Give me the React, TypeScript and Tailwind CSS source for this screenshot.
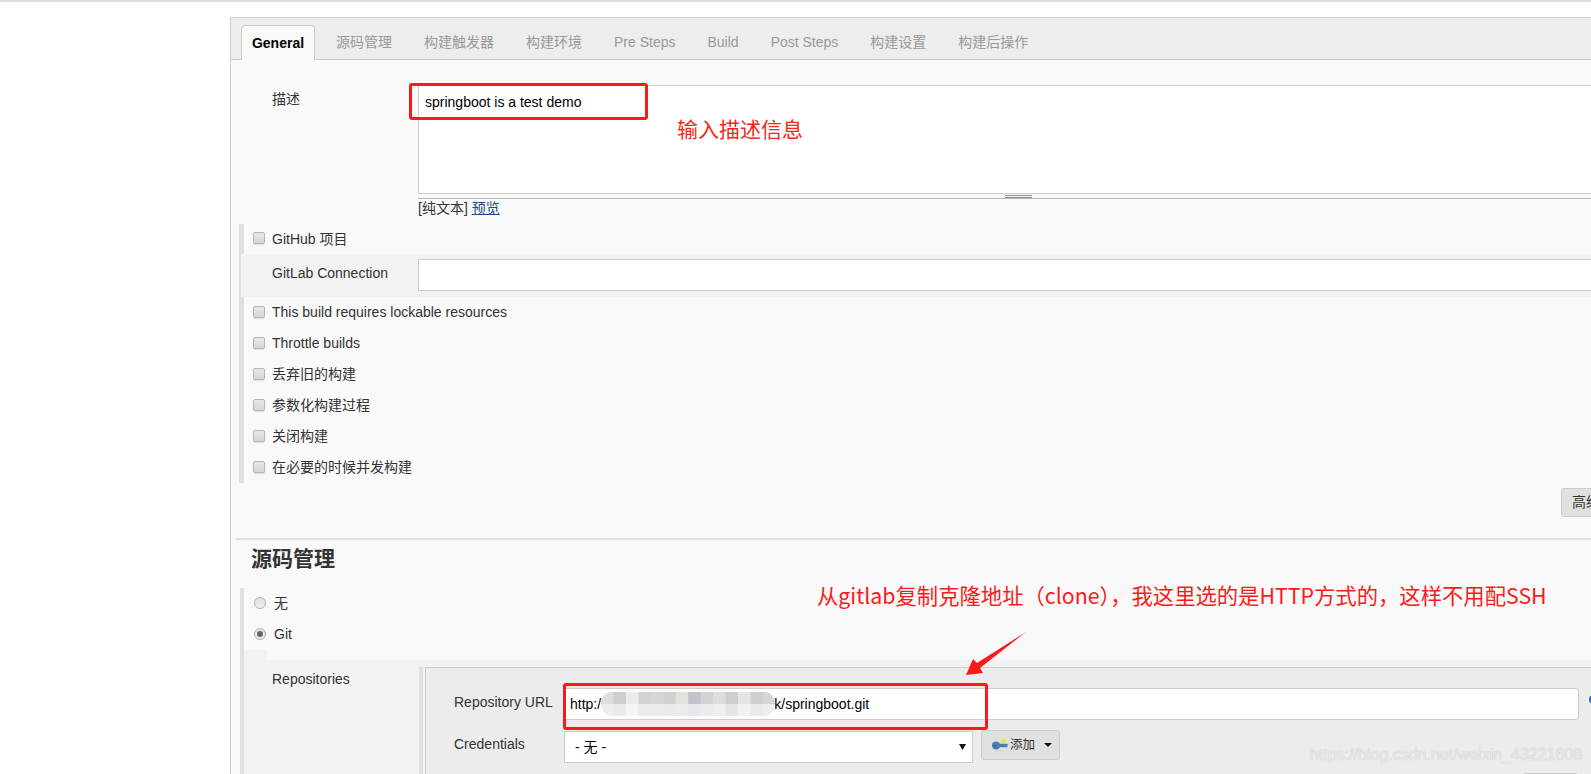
const cjk = "font-['Noto_Sans_CJK_SC','Liberation_Sans',sans-serif]";

const tabs = ["源码管理", "构建触发器", "构建环境", "Pre Steps", "Build", "Post Steps", "构建设置", "构建后操作"];

const upperOptions = ["This build requires lockable resources", "Throttle builds", "丢弃旧的构建", "参数化构建过程", "关闭构建", "在必要的时候并发构建"];

const mosaicTop = ["#dedede", "#cfcdcd", "#ebebeb", "#d2d2d2", "#d6d6d6", "#d0d0d0", "#e4e0dc", "#c4c0cc", "#d2d2d2", "#dadee2", "#cacecc", "#e2e6e6", "#d2cece", "#d6d6d6"];
const mosaicBottom = ["#eeeeee", "#eaeaea", "#f5f5f5", "#ebebeb", "#ececec", "#eaeaea", "#eeecea", "#e7e6ee", "#ececec", "#eef0f1", "#e4e6e4", "#f0f2f2", "#eaeaea", "#eeeeee"];

function Checkbox() {
  return (
    <span className="mb-[2px] block size-[12px] shrink-0 rounded-[2px] border border-[#b5b5b5] bg-gradient-to-b from-[#e8e8e8] to-[#d6d6d6] shadow-[0_1px_1px_#ddd]" />
  );
}

function Radio({ checked }: { checked?: boolean }) {
  return (
    <span className="mb-[2px] flex size-[12px] shrink-0 items-center justify-center rounded-full border border-[#b0b0b0] bg-gradient-to-b from-[#e2e2e2] to-[#eeeeee]">
      {checked && <span className="size-[6px] rounded-full bg-[#666]" />}
    </span>
  );
}

function CheckRow({ label, first }: { label: string; first?: boolean }) {
  return (
    <div className={first ? "flex h-[30px] items-center gap-[7px] pl-[9px] text-[14px] text-[#333]" : "flex h-[31px] items-center gap-[7px] pl-[9px] text-[14px] text-[#333]"}>
      <Checkbox />
      <span>{label}</span>
    </div>
  );
}

function Mosaic() {
  return (
    <svg width="174" height="24" viewBox="0 0 174 24" className="relative -mr-[4px] shrink-0 rounded-[11px]">
      {mosaicTop.map((c, i) => (
        <rect key={i} x={i * 12.45} y="0" width="12.8" height="12" fill={c} />
      ))}
      {mosaicBottom.map((c, i) => (
        <rect key={i} x={i * 12.45} y="12" width="12.8" height="12" fill={c} />
      ))}
    </svg>
  );
}

function KeyIcon() {
  return (
    <svg width="16" height="14" viewBox="0 0 16 14" className="shrink-0">
      <ellipse cx="11.5" cy="3" rx="2.6" ry="2.4" fill="#f1e05a" />
      <ellipse cx="4" cy="7.5" rx="4" ry="4" fill="#4a7db5" />
      <rect x="6" y="5.8" width="9.5" height="3.4" rx="0.5" fill="#4a7db5" />
      <rect x="2" y="7" width="2" height="1.5" fill="#2f5a8a" />
      <rect x="2" y="12.5" width="9" height="1" fill="#d0d0d0" />
    </svg>
  );
}

export default function App() {
  return (
    <div className="relative h-[774px] w-[1591px] overflow-hidden border-t-2 border-[#deded8] bg-white font-['Liberation_Sans','Noto_Sans_CJK_SC',sans-serif]">
      <div className="ml-[230px] mt-[15px] w-[1400px] border border-[#cccccc] bg-[#f9f9f9]">
        {/* tab bar */}
        <div className="flex h-[42px] items-end border-b border-[#cccccc] bg-[#ededed] pl-[10px] text-[14px]">
          <div className="-mb-px flex h-[35px] w-[74px] items-center justify-center rounded-t-[4px] border border-b-0 border-[#cccccc] bg-[#f9f9f9] font-bold text-black">
            General
          </div>
          <div className="ml-[21px] flex h-[34px] items-center gap-[32px] text-[#999]">
            {tabs.map((t) => (
              <span key={t}>{t}</span>
            ))}
          </div>
        </div>

        {/* description */}
        <div className="flex pt-[25px] text-[14px] text-[#333]">
          <div className="w-[187px] pl-[41px] pt-[4px]">描述</div>
          <div className="w-[1200px]">
            <div className="h-[109px] border border-[#cccccc] bg-white px-[6px] pt-[6px] leading-[20px] text-black">
              springboot is a test demo
            </div>
            <div className="flex h-[5px] justify-center border-b border-[#b8b8b0] pt-px">
              <span className="h-[3px] w-[27px] border-y border-[#888]" />
            </div>
            <div className="h-[20px] leading-[18px]">
              [纯文本] <span className="text-[#204a87] underline">预览</span>
            </div>
          </div>
        </div>

        {/* general options */}
        <div className="ml-[8px] mt-[5px] border-l-[5px] border-[#e0e0e0]">
          <CheckRow first label="GitHub 项目" />
          <div className="-ml-[3px] flex h-[43px] items-start bg-[#f2f2f2] pt-[5px] text-[14px] text-[#333]">
            <span className="w-[177px] pl-[31px] pt-[4px]">GitLab Connection</span>
            <div className="h-[32px] flex-1 border border-[#cccccc] bg-white" />
          </div>
          {upperOptions.map((o) => (
            <CheckRow key={o} label={o} />
          ))}
        </div>

        <div className="mt-[5px] flex pl-[1330px]">
          <div className="flex h-[29px] w-[80px] items-center rounded-[3px] border border-[#cccccc] bg-[#e0e0e0] pl-[10px] text-[14px] text-[#333]">
            高级
          </div>
        </div>

        {/* source code management */}
        <div className="ml-[5px] mt-[21px] border-t-2 border-[#e0e0e0]">
          <h2 className="pl-[15px] text-[21px] font-bold leading-[38px] text-[#333]">源码管理</h2>
        </div>

        <div className="ml-[9px] mt-[10px] border-l-4 border-[#e0e0e0]">
          <div className="flex h-[31px] items-center gap-[8px] pl-[10px] text-[14px] text-[#333]">
            <Radio />
            <span>无</span>
          </div>
          <div className="flex h-[31px] items-center gap-[8px] pl-[10px] text-[14px] text-[#333]">
            <Radio checked />
            <span>Git</span>
          </div>
          <div className="h-[10px] w-[23px] bg-[#f2f2f2]" />
          <div className="flex bg-[#f2f2f2] text-[14px] text-[#333]">
            <div className="w-[175px] pl-[28px] pt-[9px] leading-[20px]">Repositories</div>
            <div className="mt-[7px] flex border-l-[4px] border-[#e0e0e0] pl-[2px]">
              <div className="border border-[#cccccc] bg-[#ececec] pt-[20px]">
                <div className="flex items-center pl-[28px]">
                  <span className="w-[110px] pb-[4px]">Repository URL</span>
                  <div className="flex h-[32px] w-[1015px] items-center rounded-[3px] border border-[#cccccc] bg-white pl-[5px] text-black">
                    <span>http:/</span>
                    <Mosaic />
                    <span>ik/springboot.git</span>
                  </div>
                  <span className="mb-[9px] ml-[10px] size-[9px] rounded-full bg-[#3465a4]" />
                </div>
                <div className="mt-[11px] flex pl-[28px]">
                  <span className="w-[110px] pt-[3px] leading-[20px]">Credentials</span>
                  <div className="flex h-[32px] w-[409px] items-center justify-between border border-[#cccccc] bg-white pl-[10px] pr-[6px] text-black">
                    <span>- 无 -</span>
                    <svg width="7" height="6" viewBox="0 0 7 6" className="shrink-0">
                      <path d="M0 0 H7 L3.5 6 Z" fill="#111" />
                    </svg>
                  </div>
                  <div className="-mt-px ml-[8px] flex h-[30px] w-[79px] items-center rounded-[3px] border border-[#cccccc] bg-[#e0e0e0] pl-[10px] text-[12.5px] text-[#333]">
                    <KeyIcon />
                    <span className="ml-[2px]">添加</span>
                    <svg width="8" height="4" viewBox="0 0 8 4" className="ml-[9px] shrink-0">
                      <path d="M0 0 H8 L4 4 Z" fill="#111" />
                    </svg>
                  </div>
                </div>
                <div className="mt-[10px] pl-[1096px]">
                  <div className="h-[26px] w-[56px] rounded-[3px] border border-[#cccccc] bg-[#e0e0e0]" />
                </div>
                <div className="h-[40px]" />
              </div>
            </div>
          </div>
        </div>
      </div>

      {/* red annotations over the page */}
      <div className="absolute left-[409px] top-[81px] h-[37px] w-[239px] rounded-[3px] border-[3px] border-[#fb1a1a]" />
      <div className="absolute left-[563px] top-[681px] h-[47px] w-[425px] rounded-[3px] border-[3px] border-[#fb1a1a]" />
      <div className={`absolute left-[677px] top-[111px] text-[21px] leading-[30px] text-[#f5261b] ${cjk}`}>输入描述信息</div>
      <div className={`absolute left-[817px] top-[578px] whitespace-nowrap text-[21.33px] leading-[30px] text-[#fb1a1a] ${cjk}`}>
        从gitlab复制克隆地址（clone），我这里选的是HTTP方式的，这样不用配SSH
      </div>
      <svg width="70" height="50" viewBox="0 0 70 50" className="absolute left-[960px] top-[628px]">
        <path d="M66 2 L17 33 L13 29 L6 45 L23 43 L20 38 Z" fill="#fb1a1a" />
      </svg>
      <div className="absolute left-[1310px] top-[743px] whitespace-nowrap text-[16px] leading-[20px] text-[#e8e8e8] [text-shadow:0_0_1px_#bbb]">
        https://blog.csdn.net/weixin_43221608
      </div>
    </div>
  );
}
